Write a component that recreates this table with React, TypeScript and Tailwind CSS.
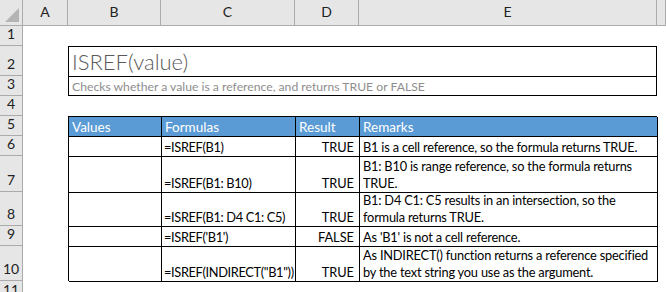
import React from "react"

const rowHeights = [20, 30, 20, 20, 20, 20, 36, 34, 20, 35]

const rows = [
  { formula: "=ISREF(B1)", result: "TRUE", remark: "B1 is a cell reference, so the formula returns TRUE." },
  { formula: "=ISREF(B1: B10)", result: "TRUE", remark: "B1: B10 is range reference, so the formula returns TRUE." },
  { formula: "=ISREF(B1: D4 C1: C5)", result: "TRUE", remark: "B1: D4 C1: C5 results in an intersection, so the formula returns TRUE." },
  { formula: "=ISREF('B1')", result: "FALSE", remark: "As 'B1' is not a cell reference." },
  { formula: '=ISREF(INDIRECT("B1"))', result: "TRUE", remark: "As INDIRECT() function returns a reference specified by the text string you use as the argument." },
]

export default function App() {
  return (
    <div
      className="w-[666px] h-[292px] overflow-hidden bg-white text-[12.8px] text-black"
      style={{ fontFamily: "Lato, 'Open Sans', sans-serif" }}
    >
      <div className="grid grid-cols-[23px_45px_93px_134px_64px_298px_1fr] grid-rows-[26px_20px_30px_20px_20px_20px_20px_36px_34px_20px_35px_1fr] h-full">
        {/* column headers */}
        <div className="bg-[#e6e6e6] border-r border-b border-[#ababab] relative">
          <div className="absolute right-[3px] bottom-[3px] w-0 h-0 border-l-[14px] border-l-transparent border-b-[14px] border-b-[#b4b4b4]" />
        </div>
        {["A", "B", "C", "D", "E", ""].map((c, i) => (
          <div
            key={i}
            className="bg-[#e6e6e6] border-r border-b border-[#ababab] flex items-end justify-center pb-[3px] text-[14px] text-[#222]"
          >
            {c}
          </div>
        ))}

        {/* row headers */}
        {rowHeights.map((_, i) => (
          <div
            key={i}
            className="col-start-1 bg-[#e6e6e6] border-r border-b border-[#ababab] flex items-end justify-center pb-[1px] text-[14px] text-[#222]"
            style={{ gridRowStart: i + 2 }}
          >
            {i + 1}
          </div>
        ))}
        <div className="col-start-1 row-start-12 bg-[#e6e6e6] border-r border-[#ababab] flex justify-center pt-[2px] text-[14px] text-[#222] leading-none overflow-hidden">
          11
        </div>

        {/* title block */}
        <div className="col-start-3 col-span-4 row-start-3 row-span-2 border border-black flex flex-col">
          <div className="h-[30px] border-b border-black flex items-end px-[3px] text-[22px] font-light text-[#595959] leading-[29px]">
            ISREF(value)
          </div>
          <div className="flex-1 flex items-end px-[3px] pb-[2px] text-[12.2px] text-[#8e8e8e] leading-none">
            Checks whether a value is a reference, and returns TRUE or FALSE
          </div>
        </div>

        {/* table */}
        <div className="col-start-3 col-span-4 row-start-6 row-span-6 grid grid-cols-[93px_134px_64px_298px] grid-rows-[20px_20px_36px_34px_20px_35px] border-l border-t border-black">
          {["Values", "Formulas", "Result", "Remarks"].map((h) => (
            <div
              key={h}
              className="bg-[#5b9bd5] text-white text-[13.5px] border-r border-b border-black px-[3px] flex items-end leading-[18px]"
            >
              {h}
            </div>
          ))}
          {rows.map((r, i) => (
            <React.Fragment key={i}>
              <div className="border-r border-b border-black" />
              <div className="border-r border-b border-black pl-[2px] flex items-end leading-[17px] whitespace-nowrap tracking-[-0.35px]">
                {r.formula}
              </div>
              <div className="border-r border-b border-black px-[5px] flex items-end justify-end leading-[17px]">
                {r.result}
              </div>
              <div className="border-r border-b border-black px-[3px] flex items-end leading-[17px] overflow-hidden tracking-[-0.2px]">
                {r.remark}
              </div>
            </React.Fragment>
          ))}
        </div>
      </div>
    </div>
  )
}
